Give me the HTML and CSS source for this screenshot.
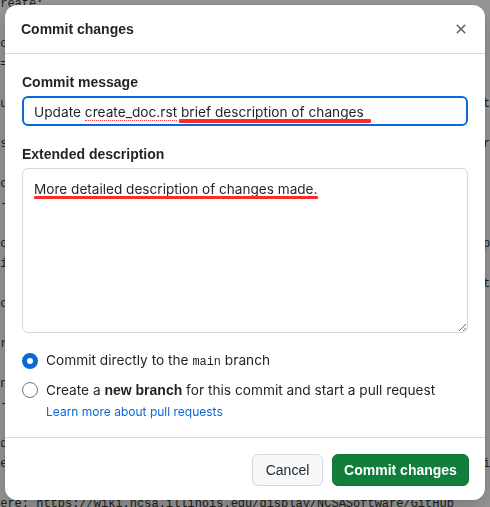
FILE: index.html
```html
<!DOCTYPE html>
<html lang="en">
<head>
<meta charset="utf-8">
<title>Commit changes</title>
<link rel="stylesheet" href="styles.css">
</head>
<body>
<div class="page">
<pre class="bg-left">create:

to create the documentation
===========================

Build the docs

Use the make command

Do not edit generated files
---------------------------

Notes
git workflow

Commit the changes

or open a pull request

in the repository
-----------------

add the files
see the wiki

here: https://wiki.ncsa.illinois.edu/display/NCSASoftware/GitHub</pre>
<pre class="bg-right">





t

ri




p

t








i</pre>
</div>

<div class="overlay">
  <div class="dialog" role="dialog" aria-labelledby="dlg-title">
    <div class="dialog-header">
      <h2 class="dialog-title" id="dlg-title">Commit changes</h2>
      <button class="close-btn" aria-label="Close">
        <svg width="16" height="16" viewBox="0 0 16 16"><path fill="currentColor" d="M3.72 3.72a.75.75 0 0 1 1.06 0L8 6.94l3.22-3.22a.749.749 0 0 1 1.275.326.749.749 0 0 1-.215.734L9.06 8l3.22 3.22a.749.749 0 0 1-.326 1.275.749.749 0 0 1-.734-.215L8 9.06l-3.22 3.22a.751.751 0 0 1-1.042-.018.751.751 0 0 1-.018-1.042L6.94 8 3.72 4.78a.75.75 0 0 1 0-1.06Z"/></svg>
      </button>
    </div>

    <div class="dialog-body">
      <div class="field">
        <label class="field-label">Commit message</label>
        <div class="control-wrap">
          <div class="text-input">Update <span class="misspelled">create_doc.rst</span> brief description of changes</div>
          <span class="annot annot-msg"></span>
        </div>
      </div>

      <div class="field field-desc">
        <label class="field-label">Extended description</label>
        <div class="control-wrap">
          <textarea class="text-area" readonly>More detailed description of changes made.</textarea>
          <span class="annot annot-desc"></span>
        </div>
      </div>

      <div class="choices">
        <div class="choice">
          <span class="radio radio-checked"></span>
          <span class="choice-label">Commit directly to the <code class="branch">main</code> branch</span>
        </div>
        <div class="choice choice-second">
          <span class="radio"></span>
          <span class="choice-label">Create a <strong>new branch</strong> for this commit and start a pull request</span>
        </div>
        <a class="learn-link" href="#">Learn more about pull requests</a>
      </div>
    </div>

    <div class="dialog-footer">
      <button class="btn btn-default">Cancel</button>
      <button class="btn btn-primary">Commit changes</button>
    </div>
  </div>
</div>
</body>
</html>
```

FILE: styles.css
```css
* { box-sizing: border-box; }

html, body {
  margin: 0;
  padding: 0;
  width: 490px;
  height: 507px;
  overflow: hidden;
  background: #ffffff;
}

.page {
  display: flex;
  justify-content: space-between;
  width: 490px;
}

.bg-left,
.bg-right {
  margin: -6px 0 0 0;
  font-family: "Liberation Mono", monospace;
  font-size: 12px;
  line-height: 20px;
  color: #353535;
  white-space: pre;
}

.bg-left { margin-left: -7px; }

.bg-right {
  width: 7px;
  overflow: visible;
}

.overlay {
  position: fixed;
  inset: 0;
  background: rgba(0, 0, 0, 0.41);
  padding: 5px;
  font-family: "Liberation Sans", Arial, sans-serif;
  color: #1f2328;
}

.dialog {
  width: 480px;
  height: 495px;
  background: #ffffff;
  border-radius: 12px;
  box-shadow: 0 0 0 1px rgba(0,0,0,0.04), 0 8px 24px rgba(0,0,0,0.2);
  display: flex;
  flex-direction: column;
  overflow: hidden;
}

.dialog-header {
  height: 48px;
  flex: none;
  display: flex;
  align-items: center;
  justify-content: space-between;
  padding: 0 8px 0 16px;
  border-bottom: 1px solid #d1d9e0;
  box-sizing: content-box;
}

.dialog-title {
  margin: 0;
  font-size: 14px;
  line-height: 20px;
  font-weight: 700;
  color: #1f2328;
}

.close-btn {
  width: 32px;
  height: 32px;
  border: 0;
  background: transparent;
  color: #59636e;
  display: flex;
  align-items: center;
  justify-content: center;
  padding: 0;
}

.dialog-body {
  flex: none;
  padding: 18px 17px 0 17px;
  border-bottom: 1px solid #d1d9e0;
  box-sizing: content-box;
  height: 365px;
}

.field { display: flex; flex-direction: column; }
.field-desc { margin-top: 18px; }

.field-label {
  font-size: 14px;
  line-height: 20px;
  font-weight: 700;
  color: #1f2328;
  margin-bottom: 4px;
}

.control-wrap { position: relative; }

.text-input,
.text-area,
.choice-label,
.learn-link,
.btn-default {
  font-family: Inter, "Liberation Sans", Arial, sans-serif;
}

.text-input {
  height: 30px;
  border: 2px solid #0969da;
  border-radius: 6px;
  padding: 4px 10px 2px 10px;
  font-size: 13.7px;
  line-height: 20px;
  color: #1f2328;
  white-space: nowrap;
}

.misspelled {
  border-bottom: 1.5px dotted #f03a40;
}

.text-area {
  display: block;
  width: 100%;
  height: 165px;
  border: 1px solid #d1d9e0;
  border-radius: 6px;
  padding: 10px 11px;
  font-size: 13.6px;
  line-height: 20px;
  color: #1f2328;
  background: #ffffff;
  resize: both;
  outline: none;
}

.annot {
  position: absolute;
  background: #ff2a2a;
  border-radius: 1px;
}

.annot-msg { left: 157px; top: 23px; width: 192px; height: 4px; }
.annot-desc { left: 12px; top: 28px; width: 284px; height: 3px; }

.choices {
  margin-top: 18px;
  display: flex;
  flex-direction: column;
}

.choice {
  display: flex;
  align-items: center;
  gap: 8px;
  height: 20px;
}

.choice-second { margin-top: 9px; }

.radio {
  width: 16px;
  height: 16px;
  flex: none;
  border-radius: 50%;
  border: 1px solid #6e7781;
  background: #ffffff;
}

.radio-checked { border: 5px solid #0969da; }

.choice-label {
  font-size: 13.7px;
  line-height: 20px;
  color: #1f2328;
  white-space: nowrap;
}

.choice-label strong {
  font-family: "Liberation Sans", Arial, sans-serif;
  font-size: 14px;
  font-weight: 700;
}

.branch {
  font-family: "Liberation Mono", monospace;
  font-size: 11.9px;
  color: #1f2328;
}

.learn-link {
  margin-top: 3px;
  margin-left: 24px;
  font-size: 12px;
  line-height: 18px;
  color: #0969da;
  text-decoration: none;
}

.dialog-footer {
  flex: 1;
  display: flex;
  justify-content: flex-end;
  align-items: flex-start;
  gap: 9px;
  padding: 16px 16px 0 16px;
}

.btn {
  height: 32px;
  padding: 0 11px;
  border-radius: 6px;
  font-family: "Liberation Sans", Arial, sans-serif;
  font-size: 14px;
  line-height: 20px;
  white-space: nowrap;
  cursor: pointer;
}

.btn-default {
  background: #f6f8fa;
  border: 1px solid #d1d9e0;
  color: #25292e;
  width: 71px;
}

.btn-primary {
  background: #127e3b;
  border: 1px solid #117336;
  color: #ffffff;
  font-weight: 700;
  width: 137px;
}
```
